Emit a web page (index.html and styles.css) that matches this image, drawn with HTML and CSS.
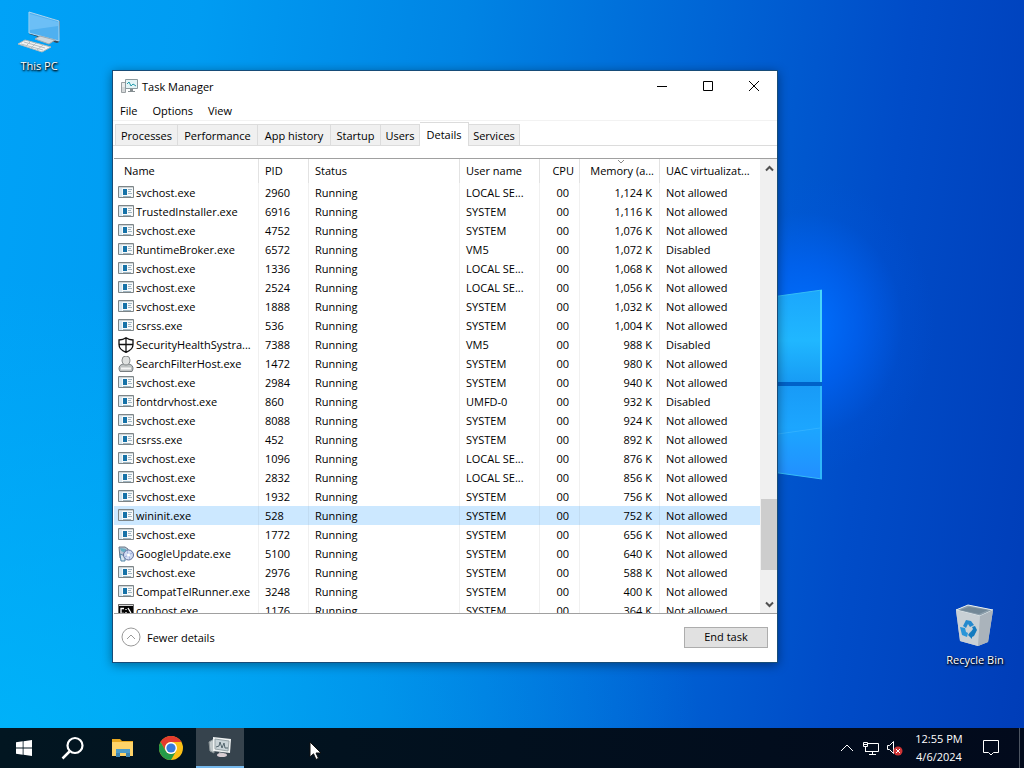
FILE: index.html
```html
<!DOCTYPE html>
<html lang="en">
  <head>
    <meta charset="UTF-8" />
    <meta name="viewport" content="width=device-width, initial-scale=1.0" />
    <title>Task Manager</title>
    <link rel="stylesheet" href="styles.css">
  </head>
  <body>
    <!-- Shared icons for the process list -->
    <svg class="sprites" aria-hidden="true">
      <symbol id="icon-exe" viewBox="0 0 16 16">
        <path d="M.5 1.500h15v11H.5z" fill="#f8fafb" stroke="#7d8588" />
        <path d="M1 2h14v1H1z" fill="#cdd3d5" />
        <path d="M1 3h3v9H1z" fill="#d9e9f2" />
        <path d="M5 4h4v6H5z" fill="#1672a8" />
        <path d="M10 4.500h4M10 6.500h3M10 8.500h4M5 11.500h8" stroke="#a1b6c2" fill="none" />
      </symbol>
      <symbol id="icon-shield" viewBox="0 0 16 16">
        <path d="M8 .8C6 2.300 3.500 3 1 3v4.500c0 3.700 3 6.300 7 7.800 4-1.500 7-4.100 7-7.800V3C12.500 3 10 2.300 8 .8zM8 1v14M1 7.500h14" fill="#fff" stroke="#111" stroke-width="1.300" />
      </symbol>
      <symbol id="icon-user" viewBox="0 0 16 16">
        <path d="M1 13c0-3 1-4 4-5h6c3 1 4 2 4 5l-1 2.500H2z" fill="#bfc3c3" stroke="#777d80" />
        <path d="M4 4a4 4 0 0 1 8 0c0 3-1.500 5-4 5S4 7 4 4z" fill="#dfe1e0" stroke="#868a8b" />
        <path d="M3 12.500h10" stroke="#f5f5f5" stroke-width="2" />
      </symbol>
      <symbol id="icon-update" viewBox="0 0 16 16">
        <path d="M1 1h6l3 2v9H2z" fill="#b7c4d3" stroke="#697888" />
        <path d="M2 2l6 1v4L3 5z" fill="#65afc6" />
        <path d="M2 8l5 2v5H3z" fill="#d8e6ef" stroke="#5185a8" />
        <circle cx="10.500" cy="9" r="5" fill="#d0dcf3" stroke="#606f9d" />
        <path d="M7 11l7-4M9 5l3 8" stroke="#9badda" />
        <circle cx="10.500" cy="9" r="1.500" fill="#fff" />
      </symbol>
      <symbol id="icon-console" viewBox="0 0 16 16">
        <path d="M.5 1.500h15v12H.5z" fill="#050505" stroke="#696969" />
        <path d="M1 2h14v1H1z" fill="#d8d8d8" />
        <path d="M6 5.500H3v5h3M8 6v1M8 9v1M10 5l3 5" stroke="#fff" fill="none" stroke-width="1.300" />
      </symbol>
    </svg>

    <main class="desktop">
      <svg class="windows-light" viewBox="0 0 124 200" aria-hidden="true">
        <defs>
          <linearGradient id="pane-top" x2="0" y2="1">
            <stop offset="0" stop-color="#1ba7fc" />
            <stop offset=".55" stop-color="#20b7ff" />
            <stop offset="1" stop-color="#179cf5" />
          </linearGradient>
          <linearGradient id="pane-bottom" x2="0" y2="1">
            <stop offset="0" stop-color="#189bf7" />
            <stop offset=".45" stop-color="#1ca6ff" />
            <stop offset="1" stop-color="#228fff" />
          </linearGradient>
        </defs>
        <path d="M0 22L122 5v92H0z" fill="url(#pane-top)" />
        <path d="M0 97h122v4H0z" fill="#0062c8" />
        <path d="M0 101h122v93L0 177z" fill="url(#pane-bottom)" />
        <path d="M0 22L122 5M0 177l122 17" stroke="#35bdf6" />
        <path d="M121 5v92" stroke="#48d5fa" stroke-width="2" />
        <path d="M121 101v93" stroke="#2fb8fa" stroke-width="2" />
        <path d="M78 149l42-6" stroke="#38b6ff" opacity=".7" />
      </svg>

      <a href="#" class="desktop-icon this-pc">
        <svg width="48" height="48" viewBox="0 0 48 48" aria-hidden="true">
          <path d="M14 4l31 9-1 21-2 1-28-9z" fill="#33485a" />
          <path d="M14 4l30 9v20l-30-8z" fill="#4fb0f0" stroke="#a8d9f7" />
          <path d="M15 6l28 8v4L15 22z" fill="#79c6f8" opacity=".7" />
          <path d="M20 31l5-3 15 4-6 4z" fill="#cdd8de" stroke="#9eabb4" />
          <path d="M3 36l7-4 26 7-9 5z" fill="#f1f3f3" stroke="#aeb9bd" />
          <path d="M6 36l22 6M9 34l21 6M10 39l5-5M16 40l5-5M22 42l6-5" stroke="#b5bec2" />
        </svg>
        <span>This PC</span>
      </a>

      <a href="#" class="desktop-icon recycle-bin">
        <svg width="48" height="48" viewBox="0 0 48 48" aria-hidden="true">
          <path d="M5 8l12-5 25 5-5 32-10 4-18-5z" fill="#c5ced4" />
          <path d="M5 8l12-5 25 5-13 6z" fill="#8d9fac" stroke="#e5edf0" />
          <path d="M9 8l9-3 19 3-9 4z" fill="#738897" />
          <path d="M5 8l24 6-2 30-18-5z" fill="#c9d0d5" />
          <path d="M29 14l13-6-5 32-10 4z" fill="#aab3bb" />
          <path d="M12 24l3-6 5 1 3 4-4 2-2-3-2 4z" fill="#2489ce" />
          <path d="M9 25l5 1 1 4 2 1-1 4-5-2z" fill="#2995d8" />
          <path d="M19 31l3-4-1-2 3-1 2 4-3 6-2 1v2l-4-4 3-4z" fill="#147bbf" />
        </svg>
        <span>Recycle Bin</span>
      </a>

      <section class="window" aria-label="Task Manager">
        <header class="title-bar">
          <svg class="title-icon" viewBox="0 0 17 16" aria-hidden="true">
            <path d="M.5 4.500h4v10h-4z" fill="#d5d8d9" stroke="#9aa0a3" />
            <path d="M1 6h3M1 8h3" stroke="#fff" />
            <path d="M4.500 1.500h12v9h-12z" fill="#e4f4f6" stroke="#8a999e" />
            <path d="M6 6l2-2 2 4 2-2 3 2" fill="none" stroke="#229bac" />
            <path d="M9 11h3v2h2v1H7v-1h2z" fill="#858e91" />
          </svg>
          <h1>Task Manager</h1>
          <div class="caption-buttons">
            <button type="button" aria-label="Minimize"><svg viewBox="0 0 12 12"><path d="M1 6.500h10" /></svg></button>
            <button type="button" aria-label="Maximize"><svg viewBox="0 0 12 12"><path d="M1.500 1.500h9v9h-9z" /></svg></button>
            <button type="button" aria-label="Close"><svg viewBox="0 0 12 12"><path d="M1 1l10 10M11 1L1 11" /></svg></button>
          </div>
        </header>

        <nav class="menu-bar">
          <button type="button">File</button>
          <button type="button">Options</button>
          <button type="button">View</button>
        </nav>

        <div class="tabs" role="tablist">
          <button type="button" role="tab">Processes</button>
          <button type="button" role="tab">Performance</button>
          <button type="button" role="tab">App history</button>
          <button type="button" role="tab">Startup</button>
          <button type="button" role="tab">Users</button>
          <button type="button" role="tab" class="active" aria-selected="true">Details</button>
          <button type="button" role="tab">Services</button>
        </div>

        <div class="details">
          <div class="list">
            <table>
              <colgroup>
                <col class="col-name">
                <col class="col-pid">
                <col class="col-status">
                <col class="col-user">
                <col class="col-cpu">
                <col class="col-memory">
                <col>
              </colgroup>
              <thead>
                <tr>
                  <th>Name</th>
                  <th>PID</th>
                  <th>Status</th>
                  <th>User name</th>
                  <th class="number">CPU</th>
                  <th class="number sorted">Memory (a...<svg class="sort-arrow" viewBox="0 0 8 4" aria-hidden="true"><path d="M1 0l3 3 3-3" /></svg></th>
                  <th>UAC virtualizat...</th>
                </tr>
              </thead>
              <tbody id="process-list"></tbody>
            </table>
          </div>
          <div class="scrollbar">
            <button type="button" aria-label="Scroll up"><svg viewBox="0 0 9 7"><path d="M1 5.500L4.500 2 8 5.500" /></svg></button>
            <div class="track"><div class="thumb"></div></div>
            <button type="button" aria-label="Scroll down"><svg viewBox="0 0 9 7"><path d="M1 1.500L4.500 5 8 1.500" /></svg></button>
          </div>
        </div>

        <footer class="window-footer">
          <button type="button" class="fewer">
            <svg viewBox="0 0 20 20" aria-hidden="true"><circle cx="10" cy="10" r="9" /><path d="M6 12l4-4 4 4" /></svg>
            Fewer details
          </button>
          <button type="button" class="end-task">End task</button>
        </footer>
      </section>
    </main>

    <footer class="taskbar">
      <div class="apps">
        <button type="button" aria-label="Start">
          <svg width="16" height="16" viewBox="0 0 16 16"><path d="M0 2.300L6.700 1.300v6.200H0zM7.500 1.200L16 0v7.500H7.500zM0 8.400h6.700v6.300L0 13.700zM7.500 8.400H16V16l-8.500-1.200z" fill="#fff" /></svg>
        </button>
        <button type="button" aria-label="Search">
          <svg width="24" height="24" viewBox="0 0 24 24"><path d="M8.500 15.500L1.500 22.500" stroke="#fff" stroke-width="2.500" /><circle cx="14" cy="9.500" r="7.500" fill="none" stroke="#fff" stroke-width="2.200" /></svg>
        </button>
        <button type="button" aria-label="File Explorer">
          <svg width="24" height="24" viewBox="0 0 24 24"><path d="M2 3h8l2 2h11v15H2z" fill="#e8a820" /><path d="M2 6h21v14H2z" fill="#ffd469" /><path d="M6 21v-7h14v7h-4v-4h-6v4z" fill="#3e84b0" /><path d="M6 13h14v4H6z" fill="#4c9cc9" /></svg>
        </button>
        <button type="button" aria-label="Google Chrome">
          <svg width="24" height="24" viewBox="0 0 24 24"><circle cx="12" cy="12" r="12" fill="#fbbf16" /><path d="M1.600 6A12 12 0 0 1 22.400 6H12a6 6 0 0 0-5.200 9z" fill="#e33b2e" /><path d="M1.600 6A12 12 0 0 0 12 24l5.200-9A6 6 0 0 1 6.800 15z" fill="#259b48" /><circle cx="12" cy="12" r="6" fill="#fff" /><circle cx="12" cy="12" r="4.600" fill="#367bdc" /></svg>
        </button>
        <button type="button" class="running" aria-label="Task Manager">
          <svg width="24" height="24" viewBox="0 0 24 24"><path d="M1 7l5-3v14l-4-2z" fill="#bfc7c9" stroke="#8a9396" /><path d="M5 2l18 2-1 14-17-2z" fill="#eef1f1" /><path d="M7 4l14 2-1 10-13-2z" fill="#c9d3d7" stroke="#98a4a8" /><path d="M8 12l3-1 1-4 2 6 2-5 1 5h3" fill="none" stroke="#53656d" /><path d="M11 17l5 1v2h-5z" fill="#9ba3a8" /><ellipse cx="14" cy="20" rx="5" ry="2" fill="#d9cdd2" /></svg>
        </button>
      </div>

      <div class="tray">
        <button type="button" aria-label="Show hidden icons"><svg width="14" height="16" viewBox="0 0 14 16"><path d="M1 11l6-6 6 6" /></svg></button>
        <button type="button" aria-label="Network"><svg width="18" height="16" viewBox="0 0 18 16"><path d="M5.500 3.500h11v8H3.500v-4M10.500 12v3M7 14.500h7M1.500 2.500h4v4h-4zM3.500 7v5M1.500 4.500h4" /></svg></button>
        <button type="button" aria-label="Volume muted"><svg width="18" height="16" viewBox="0 0 18 16"><path d="M1.500 5.500h2l4-4v12l-4-4h-2z" /><circle cx="12" cy="11" r="4.500" fill="#cf3435" stroke="none" /><path d="M10 9l4 4M14 9l-4 4" stroke="#fff" /></svg></button>
        <button type="button" class="clock"><time datetime="2024-04-06T12:55">12:55 PM<br>4/6/2024</time></button>
        <button type="button" class="notifications" aria-label="Notifications"><svg width="18" height="18" viewBox="0 0 18 18"><path d="M1.500 1.500h15v12h-5L9 16l-2.500-2.500h-5z" /></svg></button>
        <button type="button" class="show-desktop" aria-label="Show desktop"></button>
      </div>
    </footer>

    <svg class="cursor" viewBox="0 0 13 20" aria-hidden="true">
      <path d="M1 1v15l3.500-3.200L7 18.500l2.500-1.200L7 12h5z" fill="#fff" stroke="#111" />
    </svg>

    <script>
      // name, pid, user, memory, UAC virtualization, icon (exe if omitted)
      const processes = [
        ["svchost.exe", 2960, "LOCAL SE...", "1,124", "Not allowed"],
        ["TrustedInstaller.exe", 6916, "SYSTEM", "1,116", "Not allowed"],
        ["svchost.exe", 4752, "SYSTEM", "1,076", "Not allowed"],
        ["RuntimeBroker.exe", 6572, "VM5", "1,072", "Disabled"],
        ["svchost.exe", 1336, "LOCAL SE...", "1,068", "Not allowed"],
        ["svchost.exe", 2524, "LOCAL SE...", "1,056", "Not allowed"],
        ["svchost.exe", 1888, "SYSTEM", "1,032", "Not allowed"],
        ["csrss.exe", 536, "SYSTEM", "1,004", "Not allowed"],
        ["SecurityHealthSystra...", 7388, "VM5", "988", "Disabled", "shield"],
        ["SearchFilterHost.exe", 1472, "SYSTEM", "980", "Not allowed", "user"],
        ["svchost.exe", 2984, "SYSTEM", "940", "Not allowed"],
        ["fontdrvhost.exe", 860, "UMFD-0", "932", "Disabled"],
        ["svchost.exe", 8088, "SYSTEM", "924", "Not allowed"],
        ["csrss.exe", 452, "SYSTEM", "892", "Not allowed"],
        ["svchost.exe", 1096, "LOCAL SE...", "876", "Not allowed"],
        ["svchost.exe", 2832, "LOCAL SE...", "856", "Not allowed"],
        ["svchost.exe", 1932, "SYSTEM", "756", "Not allowed"],
        ["wininit.exe", 528, "SYSTEM", "752", "Not allowed"],
        ["svchost.exe", 1772, "SYSTEM", "656", "Not allowed"],
        ["GoogleUpdate.exe", 5100, "SYSTEM", "640", "Not allowed", "update"],
        ["svchost.exe", 2976, "SYSTEM", "588", "Not allowed"],
        ["CompatTelRunner.exe", 3248, "SYSTEM", "400", "Not allowed"],
        ["conhost.exe", 1176, "SYSTEM", "364", "Not allowed", "console"],
      ];
      const selectedPid = 528;

      document.getElementById("process-list").innerHTML = processes
        .map(
          ([name, pid, user, memory, uac, icon = "exe"]) => `
          <tr class="${pid === selectedPid ? "selected" : ""}">
            <td><div class="process"><svg aria-hidden="true"><use href="#icon-${icon}" /></svg>${name}</div></td>
            <td>${pid}</td>
            <td>Running</td>
            <td>${user}</td>
            <td class="number cpu">00</td>
            <td class="number">${memory} K</td>
            <td>${uac}</td>
          </tr>`
        )
        .join("");
    </script>
  </body>
</html>
```
FILE: styles.css
```css
* {
  box-sizing: border-box;
}
body {
  margin: 0;
  height: 100vh;
  display: flex;
  flex-direction: column;
  overflow: hidden;
  font-family: "Open Sans", "Noto Sans", sans-serif;
  font-size: 11px;
  line-height: 19px;
  color: #000;
}
button {
  font: inherit;
  color: inherit;
  background: none;
  border: 0;
  padding: 0;
}
.sprites {
  position: absolute;
  width: 0;
  height: 0;
}

/* Desktop */
.desktop {
  position: relative;
  flex: 1;
  min-height: 0;
  background:
    radial-gradient(ellipse 130px 150px at 805px 325px, rgba(0, 112, 255, 1), rgba(0, 104, 255, 0.6) 40%, rgba(0, 90, 230, 0.15) 75%, rgba(0, 80, 220, 0) 100%),
    radial-gradient(ellipse 700px 450px at 0 100%, rgba(0, 185, 250, 0.7), rgba(0, 180, 250, 0) 100%),
    linear-gradient(97deg, #00a2f7 0%, #009cf2 18%, #0084e4 42%, #0062d4 66%, #004cc8 82%, #003db8 100%);
}
.windows-light {
  position: absolute;
  left: 700px;
  top: 285px;
  width: 124px;
  height: 200px;
}
.desktop-icon {
  position: absolute;
  width: 76px;
  display: flex;
  flex-direction: column;
  align-items: center;
  color: #fff;
  text-decoration: none;
  text-shadow: 1px 1px 2px #000, 0 1px 2px #000;
}
.this-pc {
  left: 1px;
  top: 8px;
}
.recycle-bin {
  right: 11px;
  bottom: 59px;
}

/* Window */
.window {
  position: absolute;
  inset: 70px 246px 65px 112px;
  display: flex;
  flex-direction: column;
  background: #fff;
  border: 1px solid #174c78;
  box-shadow: 0 2px 10px rgba(0, 0, 0, 0.4);
}
.title-bar {
  display: flex;
  align-items: center;
  height: 30px;
  padding-left: 8px;
}
.title-icon {
  width: 17px;
  height: 16px;
  margin-right: 4px;
}
.title-bar h1 {
  flex: 1;
  margin: 0;
  font-size: 11px;
  font-weight: normal;
}
.caption-buttons {
  display: flex;
}
.caption-buttons button {
  width: 46px;
  height: 30px;
  display: flex;
  align-items: center;
  justify-content: center;
}
.caption-buttons svg {
  width: 12px;
  height: 12px;
  fill: none;
  stroke: #000;
}
.menu-bar {
  display: flex;
  gap: 15px;
  height: 20px;
  padding-left: 7px;
  border-bottom: 1px solid #f2f2f2;
}
.tabs {
  display: grid;
  grid-template-columns: 63px 80px 73px 50px 39px 49px 51px;
  align-items: end;
  height: 25px;
  padding-left: 2px;
  border-bottom: 1px solid #dcdcdc;
}
.tabs button {
  height: 21px;
  background: #f0f0f0;
  border: 1px solid #dcdcdc;
  border-width: 1px 1px 0 0;
}
.tabs button:first-child {
  border-left-width: 1px;
}
.tabs .active {
  height: 24px;
  margin-bottom: -1px;
  background: #fff;
}

/* Process list */
.details {
  flex: 1;
  min-height: 0;
  display: flex;
  margin: 12px 0 0 1px;
  border-top: 1px solid #a0a0a0;
  border-bottom: 1px solid #a0a0a0;
}
.list {
  flex: 1;
  overflow: hidden;
}
table {
  width: 100%;
  table-layout: fixed;
  border-collapse: separate;
  border-spacing: 0;
}
.col-name {
  width: 145px;
}
.col-pid {
  width: 50px;
}
.col-status {
  width: 151px;
}
.col-user {
  width: 80px;
}
.col-cpu {
  width: 40px;
}
.col-memory {
  width: 80px;
}
th,
td {
  padding: 0 6px;
  border-right: 1px solid #f0f0f0;
  font-weight: normal;
  text-align: left;
  white-space: nowrap;
}
th {
  height: 24px;
  padding-bottom: 2px;
  border-right-color: #e2e2e2;
}
th:first-child {
  padding-left: 10px;
}
td {
  height: 19px;
}
td:first-child {
  padding: 0 0 0 4px;
}
th:last-child,
td:last-child {
  border-right: 0;
}
.number {
  text-align: right;
}
th.number {
  padding: 0 5px 2px 0;
}
td.number {
  padding-right: 7px;
}
td.cpu {
  padding-right: 10px;
}
.sorted {
  position: relative;
}
.sort-arrow {
  position: absolute;
  top: 1px;
  left: 37px;
  width: 8px;
  height: 4px;
  fill: none;
  stroke: #888;
}
.process {
  display: flex;
  align-items: center;
  gap: 2px;
}
.process svg {
  width: 16px;
  height: 16px;
}
.selected td {
  background: #cce8ff;
  border-right-color: #c2dcf2;
}
.scrollbar {
  width: 17px;
  display: flex;
  flex-direction: column;
  padding-left: 1px;
  background: #f0f0f0;
}
.scrollbar button {
  height: 18px;
  display: flex;
  align-items: center;
  justify-content: center;
}
.scrollbar svg {
  width: 9px;
  height: 7px;
  fill: none;
  stroke: #505050;
  stroke-width: 2;
}
.track {
  flex: 1;
  display: grid;
  grid-template-rows: 323fr 71fr 25fr;
}
.thumb {
  grid-row: 2;
  background: #cdcdcd;
}
.window-footer {
  display: flex;
  align-items: center;
  justify-content: space-between;
  height: 48px;
  padding: 0 9px 2px 8px;
}
.fewer {
  display: flex;
  align-items: center;
  gap: 6px;
}
.fewer svg {
  width: 20px;
  height: 20px;
  fill: none;
  stroke: #999;
}
.end-task {
  width: 84px;
  height: 21px;
  line-height: 18px;
  background: #e1e1e1;
  border: 1px solid #adadad;
}

/* Taskbar */
.taskbar {
  display: flex;
  justify-content: space-between;
  height: 40px;
  color: #fff;
  background: linear-gradient(90deg, #021621, #02101e 50%, #020a1c);
}
.apps {
  display: flex;
  gap: 1px;
}
.apps button {
  width: 48px;
  display: flex;
  align-items: center;
  justify-content: center;
}
.apps .running {
  background: #36434d;
  border-bottom: 2px solid #76b9ed;
}
.tray {
  display: flex;
}
.tray button {
  width: 24px;
  display: flex;
  align-items: center;
  justify-content: center;
}
.tray svg {
  fill: none;
  stroke: #fff;
}
.tray .clock {
  width: 64px;
  line-height: 18px;
}
.tray .notifications {
  width: 40px;
  margin-right: 8px;
}
.tray .show-desktop {
  width: 5px;
  border-left: 1px solid #4d5562;
}
.cursor {
  position: absolute;
  left: 309px;
  top: 741px;
  width: 13px;
  height: 20px;
}
```
